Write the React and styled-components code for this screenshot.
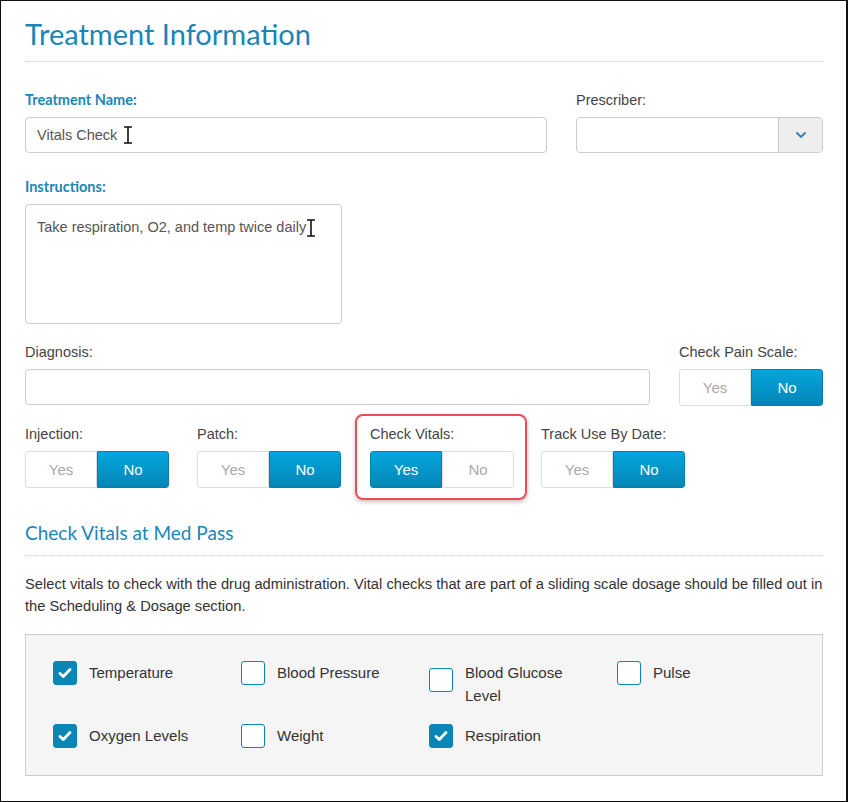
import React from 'react';
import styled, { createGlobalStyle } from 'styled-components';

const Global = createGlobalStyle`
  html, body { margin: 0; background: #fff; }
  body { font-family: 'Liberation Sans', Arial, sans-serif; color: #333; }
`;

const Frame = styled.div`
  width: 848px;
  height: 802px;
  box-sizing: border-box;
  border: 1px solid #111;
  border-right-width: 2px;
  padding: 0 23px 0 24px;
  overflow: hidden;
`;

const Title = styled.h1`
  font-family: Lato, sans-serif;
  font-weight: 400;
  font-size: 29px;
  color: #1a86b8;
  margin: 0;
  padding: 15px 0 10px;
  border-bottom: 1px dotted #ccc;
`;

const SubTitle = styled.h2`
  font-family: Lato, sans-serif;
  font-weight: 400;
  font-size: 19px;
  color: #1a86b8;
  margin: 0;
  padding: 0 0 11px;
  border-bottom: 1px dotted #ccc;
`;

const Row = styled.div`
  display: flex;
  gap: ${p => p.gap || 29}px;
  margin-top: ${p => p.mt || 0}px;
`;

const Field = styled.div`
  display: flex;
  flex-direction: column;
  width: ${p => p.w ? p.w + 'px' : 'auto'};
  flex: ${p => p.w ? 'none' : 1};
`;

const Label = styled.label`
  font-size: 14.5px;
  line-height: 18px;
  margin-bottom: 8px;
  ${p => p.strong
    ? 'font-family: Lato, sans-serif; font-weight: 700; color: #1a86b8;'
    : 'color: #444;'}
`;

const Input = styled.div`
  height: 36px;
  box-sizing: border-box;
  border: 1px solid #ccc;
  border-radius: 4px;
  display: flex;
  align-items: center;
  padding: 0 11px;
  font-size: 14.5px;
  color: #555;
`;

const TextArea = styled(Input)`
  width: 317px;
  height: 120px;
  align-items: flex-start;
  padding-top: 14px;
`;

const Select = styled(Input)`
  padding: 0;
  justify-content: flex-end;
  overflow: hidden;
`;

const Chevron = styled.div`
  width: 43px;
  height: 100%;
  background: #eee;
  border-left: 1px solid #ccc;
  display: flex;
  align-items: center;
  justify-content: center;
`;

const Toggle = styled.div`
  display: flex;
  height: 37px;
  width: ${p => p.w || 144}px;
`;

const Opt = styled.div`
  flex: 1;
  display: flex;
  align-items: center;
  justify-content: center;
  font-size: 15px;
  box-sizing: border-box;
  ${p => p.on
    ? 'background: linear-gradient(#03a6dc, #0585b6); color: #fff; border: 1px solid #0580ae;'
    : 'background: #fff; color: #aaa; border: 1px solid #ddd;'}
  &:first-child { border-radius: 3px 0 0 3px; }
  &:last-child { border-radius: 0 3px 3px 0; }
`;

const Highlight = styled.div`
  margin: -11px -14px;
  padding: 9px 13px 10px;
  border: 2px solid #ef4a4f;
  border-radius: 8px;
  box-shadow: 0 2px 4px rgba(0,0,0,0.25);
`;

const Para = styled.p`
  font-size: 14.7px;
  line-height: 22px;
  margin: 17px 0 17px;
  color: #333;
`;

const VitalsBox = styled.div`
  background: #f5f5f5;
  border: 1px solid #ccc;
  padding: 26px 27px 27px;
  display: grid;
  grid-template-columns: repeat(4, 188px);
  row-gap: 17px;
`;

const Check = styled.div`
  display: flex;
  align-items: flex-start;
  gap: 12px;
  font-size: 15px;
  line-height: 23px;
  color: #333;
`;

const Box = styled.span`
  flex: none;
  width: 24px;
  height: 24px;
  box-sizing: border-box;
  border-radius: 3px;
  margin-top: ${p => p.off || 0}px;
  background: ${p => p.on ? '#0a86b6' : '#fff'};
  border: 1px solid #0a86b6;
  display: flex;
  align-items: center;
  justify-content: center;
`;

const Cursor = ({ gap = 6 }) => (
  <svg width="10" height="18" viewBox="0 0 10 18" style={{ marginLeft: gap }}>
    <path d="M1 1h8M5 1v16M1 17h8" stroke="#111" strokeWidth="1.6" fill="none" />
  </svg>
);

const Tick = () => (
  <svg width="14" height="12" viewBox="0 0 14 12">
    <path d="M2 6.5l3.3 3L12 2.5" stroke="#fff" strokeWidth="2.8" fill="none" strokeLinecap="round" strokeLinejoin="round" />
  </svg>
);

const YesNo = ({ yes }) => (
  <Toggle>
    <Opt on={yes}>Yes</Opt>
    <Opt on={!yes}>No</Opt>
  </Toggle>
);

const vitals = [
  ['Temperature', true], ['Blood Pressure', false], ['Blood Glucose Level', false, 7], ['Pulse', false],
  ['Oxygen Levels', true], ['Weight', false], ['Respiration', true],
];

export default function App() {
  return (
    <Frame>
      <Global />
      <Title>Treatment Information</Title>

      <Row mt={29}>
        <Field>
          <Label strong>Treatment Name:</Label>
          <Input>Vitals Check<Cursor /></Input>
        </Field>
        <Field w={247}>
          <Label>Prescriber:</Label>
          <Select>
            <Chevron>
              <svg width="12" height="8" viewBox="0 0 12 8">
                <path d="M1.5 1.5l4.5 4.5 4.5-4.5" stroke="#2a7fb0" strokeWidth="1.8" fill="none" />
              </svg>
            </Chevron>
          </Select>
        </Field>
      </Row>

      <Row mt={25}>
        <Field w={317}>
          <Label strong>Instructions:</Label>
          <TextArea>Take respiration, O2, and temp twice daily<Cursor gap={0} /></TextArea>
        </Field>
      </Row>

      <Row mt={19}>
        <Field>
          <Label>Diagnosis:</Label>
          <Input />
        </Field>
        <Field w={144}>
          <Label>Check Pain Scale:</Label>
          <YesNo yes={false} />
        </Field>
      </Row>

      <Row mt={19} gap={28}>
        <Field w={144}>
          <Label>Injection:</Label>
          <YesNo yes={false} />
        </Field>
        <Field w={144}>
          <Label>Patch:</Label>
          <YesNo yes={false} />
        </Field>
        <Field w={144}>
          <Highlight>
            <Field>
              <Label>Check Vitals:</Label>
              <YesNo yes />
            </Field>
          </Highlight>
        </Field>
        <Field w={144}>
          <Label>Track Use By Date:</Label>
          <YesNo yes={false} />
        </Field>
      </Row>

      <div style={{ marginTop: 32 }}>
        <SubTitle>Check Vitals at Med Pass</SubTitle>
      </div>
      <Para>
        Select vitals to check with the drug administration. Vital checks that are part of a sliding scale dosage should be filled out in the Scheduling &amp; Dosage section.
      </Para>

      <VitalsBox>
        {vitals.map(([name, on, off]) => (
          <Check key={name}>
            <Box on={on} off={off}>{on && <Tick />}</Box>
            <span style={{ width: 120 }}>{name}</span>
          </Check>
        ))}
      </VitalsBox>
    </Frame>
  );
}
